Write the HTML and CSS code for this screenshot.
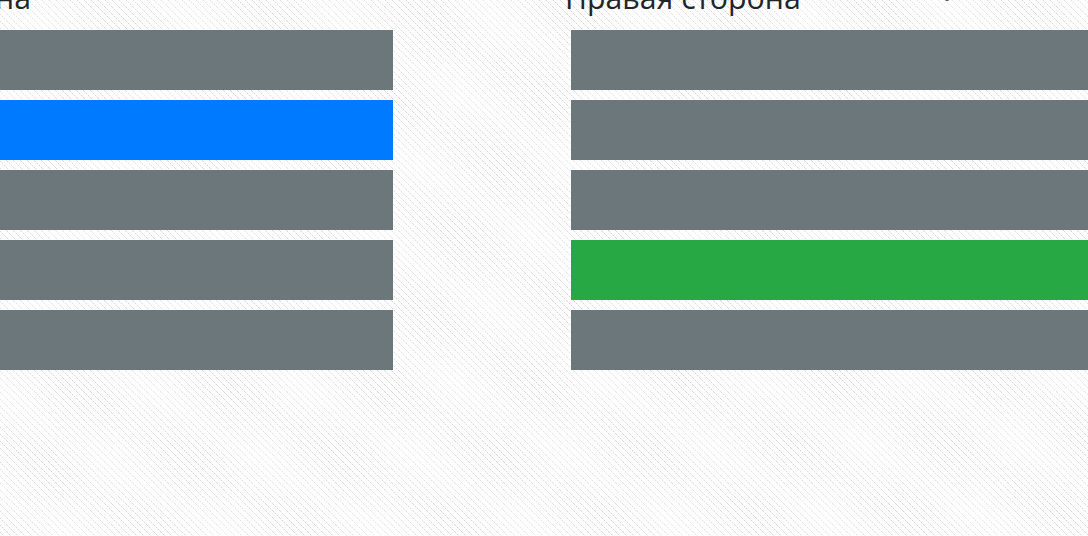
FILE: index.html
```html
<!DOCTYPE html>
<html lang="ru">
<head>
<meta charset="utf-8">
<title>Стороны</title>
<link rel="stylesheet" href="styles.css">
</head>
<body>
<span class="clipped-mark" aria-hidden="true"></span>
<main class="columns">
  <section class="side side-left">
    <h2 class="side-title">Левая сторона</h2>
    <ul class="bars">
      <li class="bar"></li>
      <li class="bar bar-primary"></li>
      <li class="bar"></li>
      <li class="bar"></li>
      <li class="bar"></li>
    </ul>
  </section>
  <section class="side side-right">
    <h2 class="side-title">Правая сторона</h2>
    <ul class="bars">
      <li class="bar"></li>
      <li class="bar"></li>
      <li class="bar"></li>
      <li class="bar bar-success"></li>
      <li class="bar"></li>
    </ul>
  </section>
</main>
</body>
</html>
```
FILE: styles.css
```css
html, body {
  margin: 0;
  height: 100%;
  overflow: hidden;
}
body {
  background-color: #fcfcfc;
  background-image:
    repeating-linear-gradient(32deg, rgba(255,255,255,0) 0, rgba(255,255,255,.35) 37px, rgba(255,255,255,0) 83px),
    repeating-linear-gradient(118deg, rgba(255,255,255,0) 0, rgba(255,255,255,.25) 53px, rgba(255,255,255,0) 131px),
    url("data:image/svg+xml,%3Csvg xmlns='http://www.w3.org/2000/svg' width='7' height='7' shape-rendering='crispEdges'%3E%3Cg fill='%23d2d2d2'%3E%3Crect x='0' y='0' width='1' height='1'/%3E%3Crect x='2' y='2' width='1' height='1'/%3E%3Crect x='4' y='4' width='1' height='1'/%3E%3Crect x='6' y='6' width='1' height='1'/%3E%3C/g%3E%3Cg fill='%23efefef'%3E%3Crect x='1' y='1' width='1' height='1'/%3E%3Crect x='3' y='3' width='1' height='1'/%3E%3Crect x='5' y='5' width='1' height='1'/%3E%3C/g%3E%3C/svg%3E");
  font-family: "Open Sans", sans-serif;
  color: #212529;
}
.clipped-mark {
  position: absolute;
  top: -2px;
  left: 945px;
  width: 2px;
  height: 2px;
  border: 1px solid #4a4f54;
  border-top: 0;
  border-radius: 0 0 2px 2px;
}
.columns {
  display: grid;
  grid-template-columns: 517px 517px;
  column-gap: 178px;
  margin: -26px 0 0 -124px;
  width: 1300px;
}
.side-title {
  margin: 0 0 6px -6px;
  height: 50px;
  font-size: 30.25px;
  font-weight: 400;
  line-height: 48px;
  white-space: nowrap;
}
.side-left .side-title {
  display: flex;
  justify-content: flex-end;
  margin-left: 0;
  padding-right: 362px;
}
.bars {
  list-style: none;
  margin: 0;
  padding: 0;
  display: flex;
  flex-direction: column;
  gap: 10px;
}
.bar {
  height: 60px;
  background: #6b777b;
}
.bar-primary { background: #007bff; }
.bar-success { background: #28a745; }
```
